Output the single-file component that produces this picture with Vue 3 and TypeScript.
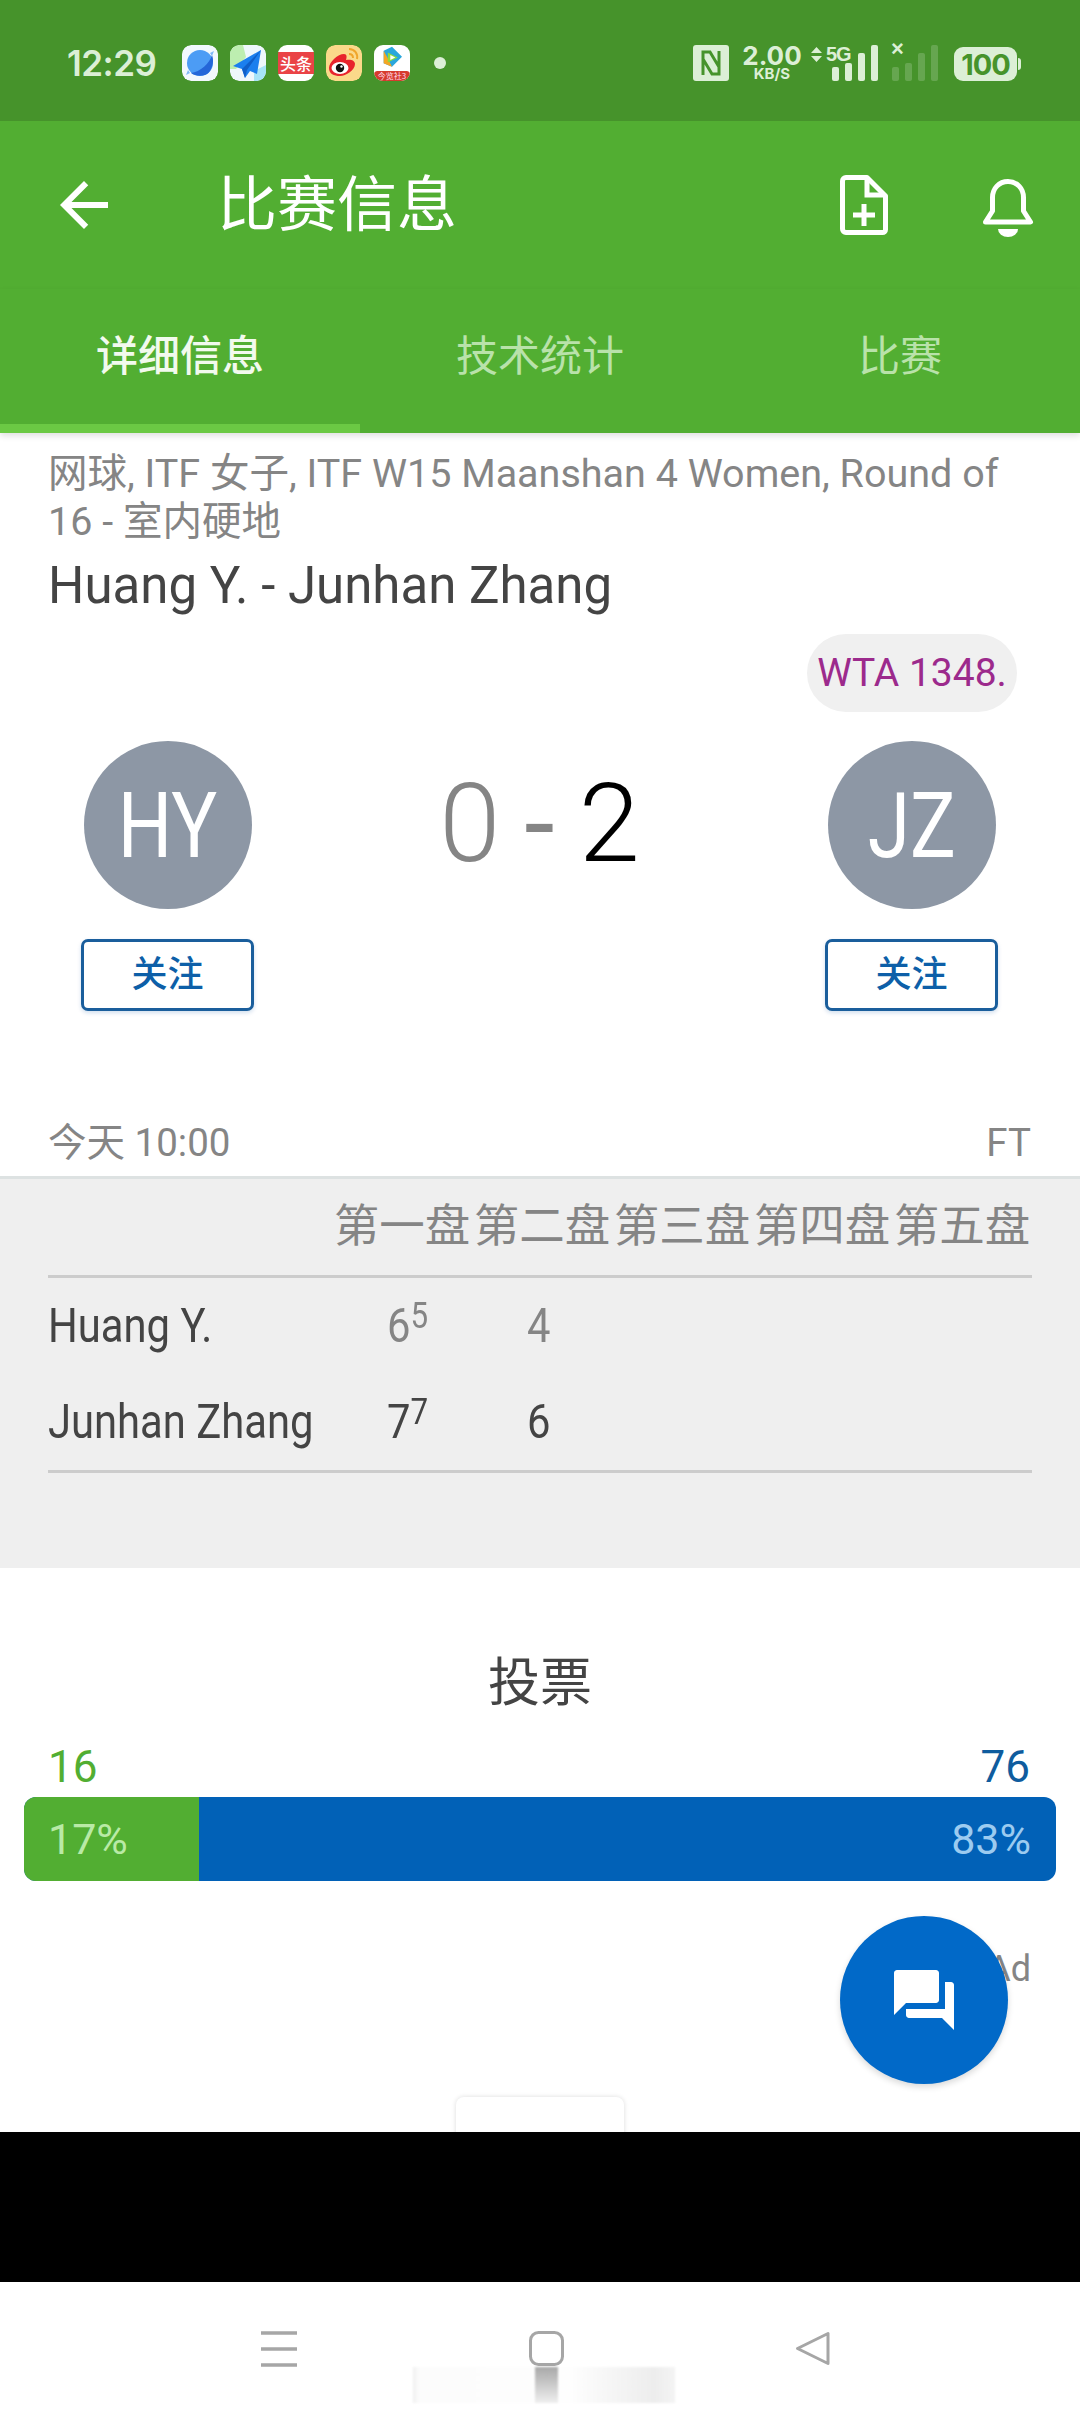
<script setup lang="ts">
const tabs = [
  { label: '详细信息', active: true },
  { label: '技术统计', active: false },
  { label: '比赛', active: false },
]
const setHeaders = ['第一盘', '第二盘', '第三盘', '第四盘', '第五盘']
const players = [
  { initials: 'HY' },
  { initials: 'JZ', rank: 'WTA 1348.' },
]
const rows = [
  { name: 'Huang Y.', sets: [{ v: '6', tie: '5', won: false }, { v: '4', won: false }] },
  { name: 'Junhan Zhang', sets: [{ v: '7', tie: '7', won: true }, { v: '6', won: true }] },
]
const signalBars = [14, 18, 28, 36]
const votes = { home: 16, away: 76, homePct: 17, awayPct: 83 }
</script>

<template>
  <div class="page">
    <div class="status">
      <span class="clock">12:29</span>
      <div class="apps">
        <svg class="app" viewBox="0 0 36 36">
          <rect width="36" height="36" rx="9" fill="#f2f8fd" />
          <circle cx="18" cy="18" r="13" fill="#4c9cf5" />
          <path d="M30 10c-2 8-12 17-21 18 5 4 15 4 19-2 3-5 4-11 2-16z" fill="#2466d8" />
          <path d="M28 8l4-2-2 5zM8 28l-4 2 2-5z" fill="#7db8f7" />
        </svg>
        <svg class="app" viewBox="0 0 36 36">
          <rect width="36" height="36" rx="9" fill="#eef7fb" />
          <path d="M0 9a9 9 0 0 1 9-9h4l3 12L6 24H0z" fill="#bdeeb0" />
          <path d="M24 36h3a9 9 0 0 0 9-9v-7l-12 6z" fill="#a6e4f7" />
          <path d="M31 5 3 21l9 3 3 9 5-7 7 3z" fill="#1b7fee" />
          <path d="M31 5 12 24l3 9 2-8z" fill="#0f5fc8" />
        </svg>
        <div class="app toutiao">
          <span>头条</span>
        </div>
        <svg class="app" viewBox="0 0 36 36">
          <rect width="36" height="36" rx="9" fill="#fbd98a" />
          <path d="M3 23c0-6 9-14 15-14 3 0 3 3 2 6 4-1 9 0 9 4 0 6-9 12-15 12S3 29 3 23z" fill="#e8232c" />
          <ellipse cx="14" cy="23" rx="8.5" ry="6" fill="#fff" />
          <circle cx="14" cy="23" r="4.2" fill="#111" />
          <circle cx="15.5" cy="21.5" r="1.2" fill="#fff" />
          <path d="M23 4c6 0 9 5 8 10M23 9c3 0 4 2 4 4" fill="none" stroke="#f0a52a" stroke-width="2" />
        </svg>
        <div class="app video">
          <svg viewBox="0 0 36 36">
            <path d="M8 7 18 2l12 12-12 12-10-4z" fill="#2aa7dc" />
            <path d="M8 7v15l10 4-6-12z" fill="#f5a623" />
            <path d="M13 9v12l12-6z" fill="#8ddb3c" />
            <path d="M16 12v6l6-3z" fill="#fff" />
          </svg>
          <span>今览社3</span>
        </div>
        <i class="dot"></i>
      </div>

      <div class="sys">
        <svg class="nfc" viewBox="0 0 36 36">
          <rect width="36" height="36" rx="3" fill="#dcefd6" />
          <path d="M10 30V7h7l9 15M26 6v23h-7l-9-15" fill="none" stroke="#46932b" stroke-width="3" />
        </svg>
        <div class="speed">
          <b>2.00</b>
          <small>KB/S</small>
        </div>
        <div class="net">
          <svg class="updown" viewBox="0 0 11 15">
            <path d="M5.5 0 11 6H0zM0 9h11l-5.5 6z" fill="#dcefd6" />
          </svg>
          <b>5G</b>
        </div>
        <div class="bars">
          <i v-for="h in signalBars" :key="h" :style="{ height: h + 'px' }"></i>
        </div>
        <div class="sim2">
          <span>×</span>
          <div class="bars faded">
            <i v-for="h in signalBars" :key="h" :style="{ height: h + 'px' }"></i>
          </div>
        </div>
        <div class="battery"><span>100</span></div>
      </div>
    </div>

    <div class="toolbar">
      <svg class="back" viewBox="0 0 24 24">
        <path d="M20 11H7.83l5.59-5.59L12 4l-8 8 8 8 1.41-1.41L7.83 13H20v-2z" fill="#fff" />
      </svg>
      <h1>比赛信息</h1>
      <svg class="file" viewBox="0 0 48 60">
        <path d="M6 2.5h21L45.5 21v33.5a3 3 0 0 1-3 3H6a3.5 3.5 0 0 1-3.5-3.5V6A3.5 3.5 0 0 1 6 2.5z" fill="none" stroke="#fff" stroke-width="5" stroke-linejoin="round" />
        <path d="M27 3v17h18M24 29v22M13 40h22" fill="none" stroke="#fff" stroke-width="5" />
      </svg>
      <svg class="bell" viewBox="0 0 52 58">
        <path d="M26 2.5c9 0 15.5 7 15.5 16V32l7 11H3.5l7-11V18.5c0-9 6.5-16 15.5-16z" fill="none" stroke="#fff" stroke-width="5" stroke-linejoin="round" />
        <path d="M16 50h20a10 8 0 0 1-20 0z" fill="#fff" />
      </svg>
    </div>

    <div class="tabs">
      <div v-for="t in tabs" :key="t.label" class="tab" :class="{ 'tab--active': t.active }">{{ t.label }}</div>
    </div>

    <main class="content">
      <div class="meta">网球, ITF 女子, ITF W15 Maanshan 4 Women, Round of 16 - 室内硬地</div>
      <div class="match">Huang Y. - Junhan Zhang</div>

      <div class="rank-row"><span class="rank">{{ players[1].rank }}</span></div>

      <div class="hero">
        <div class="player">
          <div class="avatar"><span>{{ players[0].initials }}</span></div>
          <button class="follow">关注</button>
        </div>
        <div class="score">
          <span class="lost">0</span><span class="dash">-</span><span class="won">2</span>
        </div>
        <div class="player">
          <div class="avatar"><span>{{ players[1].initials }}</span></div>
          <button class="follow">关注</button>
        </div>
      </div>

      <div class="time-row">
        <span>今天 10:00</span>
        <span>FT</span>
      </div>

      <section class="sets">
        <div class="sets-head">
          <span></span>
          <span v-for="h in setHeaders" :key="h">{{ h }}</span>
        </div>
        <div class="sets-body">
          <div v-for="r in rows" :key="r.name" class="sets-row">
            <span class="name"><em>{{ r.name }}</em></span>
            <span v-for="(s, i) in r.sets" :key="i" class="set" :class="{ 'set--won': s.won }">
              <em>{{ s.v }}<sup v-if="s.tie">{{ s.tie }}</sup></em>
            </span>
          </div>
        </div>
      </section>

      <section class="vote">
        <h2>投票</h2>
        <div class="vote-counts">
          <span class="c-home">{{ votes.home }}</span>
          <span class="c-away">{{ votes.away }}</span>
        </div>
        <div class="vote-bar">
          <div class="vote-home" :style="{ width: '175px' }">{{ votes.homePct }}%</div>
          <div class="vote-away">{{ votes.awayPct }}%</div>
        </div>
        <div class="ad">Ad</div>
        <div class="ad-card"></div>
      </section>

      <div class="fab">
        <svg viewBox="0 0 24 24">
          <path d="M21 6h-2v9H6v2c0 .55.45 1 1 1h11l4 4V7c0-.55-.45-1-1-1zm-4 6V3c0-.55-.45-1-1-1H3c-.55 0-1 .45-1 1v14l4-4h10c.55 0 1-.45 1-1z" fill="#fff" />
        </svg>
      </div>
    </main>

    <div class="blackout"></div>

    <nav class="navbar">
      <svg class="nav-menu" viewBox="0 0 36 36">
        <path d="M0 2h36M0 18h36M0 34h36" stroke="#a6a6a6" stroke-width="3.4" />
      </svg>
      <svg class="nav-home" viewBox="0 0 35 35">
        <rect x="1.5" y="1.5" width="32" height="32" rx="8" fill="none" stroke="#a6a6a6" stroke-width="3" />
      </svg>
      <svg class="nav-back" viewBox="0 0 35 35">
        <path d="M33 2.5v30L2.5 17.5z" fill="none" stroke="#a6a6a6" stroke-width="3" stroke-linejoin="round" />
      </svg>
      <div class="streak"><i></i></div>
    </nav>
  </div>
</template>

<style scoped>
.page {
  position: relative;
  display: flex;
  flex-direction: column;
  width: 1080px;
  height: 2414px;
  overflow: hidden;
  background: #fff;
  font-family: Roboto, "Noto Sans CJK SC", sans-serif;
}

.status {
  display: flex;
  align-items: center;
  height: 121px;
  padding: 5px 63px 0 67px;
  box-sizing: border-box;
  background: #46932b;
  color: #dcefd6;
  flex: none;
}
.clock {
  width: 115px;
  font: 600 35px Inter, Roboto, sans-serif;
  letter-spacing: -0.5px;
}
.apps {
  display: flex;
  align-items: center;
  gap: 12px;
}
.app {
  display: block;
  width: 36px;
  height: 36px;
  flex: none;
  border-radius: 9px;
  overflow: hidden;
}
.toutiao {
  display: flex;
  align-items: center;
  justify-content: center;
  background: linear-gradient(#fff 0 7px, #ea4346 7px 29px, #fff 29px);
  color: #fff;
  font: 500 16px "Noto Sans CJK SC", sans-serif;
  white-space: nowrap;
}
.video {
  position: relative;
  background: #fff;
}
.video svg {
  display: block;
  width: 30px;
  height: 30px;
  margin: 0 auto;
}
.video span {
  position: absolute;
  left: 0;
  right: 0;
  bottom: 0;
  height: 10px;
  background: #d63b2e;
  border-radius: 5px 5px 9px 9px;
  color: #fde;
  font: 8px/10px "Noto Sans CJK SC", sans-serif;
  text-align: center;
  white-space: nowrap;
}
.dot {
  width: 12px;
  height: 12px;
  margin-left: 12px;
  border-radius: 50%;
  background: #dcefd6;
}
.sys {
  display: flex;
  align-items: flex-end;
  height: 36px;
  margin-left: auto;
}
.nfc {
  width: 36px;
  height: 36px;
  flex: none;
}
.speed {
  display: flex;
  flex-direction: column;
  align-items: center;
  width: 58px;
  margin-left: 14px;
  font-family: Inter, Roboto, sans-serif;
}
.speed b {
  font-size: 26px;
  line-height: 22px;
  font-weight: 700;
}
.speed small {
  font-size: 15px;
  line-height: 14px;
  font-weight: 700;
}
.net {
  display: flex;
  align-items: flex-start;
  align-self: flex-start;
  gap: 4px;
  width: 37px;
  margin-left: 10px;
  margin-right: -16px;
  font: 700 20px/18px "Liberation Sans", sans-serif;
}
.updown {
  width: 11px;
  height: 15px;
  margin-top: 2px;
  flex: none;
}
.net b {
  letter-spacing: -1px;
  white-space: nowrap;
}
.bars {
  display: flex;
  align-items: flex-end;
  gap: 6px;
}
.bars i {
  width: 7px;
  border-radius: 2px;
  background: #dcefd6;
}
.sim2 {
  position: relative;
  margin-left: 14px;
}
.sim2 span {
  position: absolute;
  left: -1px;
  top: -8px;
  font: 700 22px/24px "Liberation Sans", sans-serif;
}
.bars.faded i {
  opacity: 0.22;
}
.battery {
  position: relative;
  display: flex;
  align-items: center;
  justify-content: center;
  width: 63px;
  height: 34px;
  margin-left: 16px;
  border-radius: 9px;
  background: #dcefd6;
  color: #46932b;
  font: 700 29px Inter, Roboto, sans-serif;
  letter-spacing: -1px;
}
.battery::after {
  content: "";
  position: absolute;
  right: -4px;
  top: 11px;
  width: 3px;
  height: 12px;
  border-radius: 0 3px 3px 0;
  background: #dcefd6;
}

.toolbar {
  display: flex;
  align-items: center;
  height: 168px;
  padding: 0 46px 0 48px;
  box-sizing: border-box;
  background: #52ae32;
  flex: none;
}
.back {
  width: 72px;
  height: 72px;
  flex: none;
}
.toolbar h1 {
  margin: 2px 0 0 97px;
  font-size: 60px;
  font-weight: 400;
  line-height: 70px;
  color: #fff;
}
.file {
  width: 48px;
  height: 60px;
  margin-left: auto;
  flex: none;
}
.bell {
  width: 52px;
  height: 58px;
  margin-top: 6px;
  margin-left: 94px;
  flex: none;
}

.tabs {
  position: relative;
  z-index: 1;
  display: flex;
  height: 144px;
  background: #52ae32;
  box-shadow: 0 3px 6px rgba(0, 0, 0, 0.12);
  flex: none;
}
.tab {
  display: flex;
  justify-content: center;
  box-sizing: border-box;
  width: 360px;
  padding-top: 40px;
  color: #b9e2aa;
  font-size: 42px;
  line-height: 56px;
  font-weight: 400;
}
.tab--active {
  color: #f2faee;
  font-weight: 500;
  border-bottom: 9px solid #6bc944;
}

.content {
  position: relative;
  height: 1699px;
  overflow: hidden;
  flex: none;
}
.meta {
  padding: 17px 50px 0 48px;
  color: #858585;
  font-size: 39.5px;
  line-height: 48px;
}
.match {
  margin-top: 10px;
  padding-left: 48px;
  color: #444;
  font-size: 51px;
  line-height: 60px;
}
.rank-row {
  display: flex;
  justify-content: flex-end;
  margin-top: 18px;
  padding-right: 63px;
}
.rank {
  box-sizing: border-box;
  width: 210px;
  height: 78px;
  border-radius: 39px;
  background: #f0f0f0;
  color: #9c2a8c;
  font-size: 39px;
  line-height: 78px;
  text-align: center;
  white-space: nowrap;
}
.hero {
  display: flex;
  justify-content: space-between;
  margin-top: 29px;
  padding: 0 82px 0 81px;
}
.player {
  display: flex;
  flex-direction: column;
  align-items: center;
  width: 173px;
}
.avatar {
  display: flex;
  align-items: center;
  justify-content: center;
  width: 168px;
  height: 168px;
  padding-top: 3px;
  box-sizing: border-box;
  border-radius: 50%;
  background: #8d97a5;
  color: #fff;
  font-size: 90px;
}
.avatar span {
  transform: scaleX(0.85);
}
.follow {
  box-sizing: border-box;
  width: 173px;
  height: 72px;
  margin-top: 30px;
  padding: 0 0 8px;
  border: 3px solid #1a5e9c;
  border-radius: 7px;
  background: #fff;
  box-shadow: 0 2px 4px rgba(0, 80, 160, 0.18);
  color: #0d5fa8;
  font: 500 36px "Noto Sans CJK SC", sans-serif;
}
.score {
  display: flex;
  align-items: center;
  justify-content: center;
  gap: 24px;
  height: 166px;
  padding-top: 0;
  font-size: 110px;
  font-weight: 300;
  line-height: 166px;
}
.lost {
  color: #858585;
}
.won {
  color: #000;
}
.dash {
  color: #858585;
  font-weight: 400;
}
.time-row {
  display: flex;
  justify-content: space-between;
  margin-top: 101px;
  padding: 0 49px 0 48px;
  height: 64px;
  color: #858585;
  font-size: 38.5px;
  line-height: 62px;
}

.sets {
  box-sizing: border-box;
  height: 392px;
  padding: 0 48px;
  background: #efefef;
  border-top: 3px solid #dde2e2;
}
.sets-head {
  display: grid;
  grid-template-columns: minmax(0, 1fr) repeat(5, 140px);
  align-items: center;
  height: 96px;
  border-bottom: 3px solid #cccccc;
  color: #858585;
  font-size: 45.5px;
  line-height: 90px;
  text-align: center;
  white-space: nowrap;
}
.sets-body {
  height: 192px;
  border-bottom: 3px solid #cccccc;
}
.sets-row {
  display: grid;
  grid-template-columns: minmax(0, 1fr) repeat(5, 140px);
  height: 96px;
  align-items: center;
  font-size: 48px;
  line-height: 96px;
  white-space: nowrap;
}
.name {
  color: #444;
}
.name em,
.set em {
  display: inline-block;
  font-style: normal;
  transform: scaleX(0.87);
  transform-origin: left center;
}
.set {
  padding-left: 55px;
  color: #858585;
}
.set--won {
  color: #444;
}
.set sup {
  font-size: 36px;
  line-height: 0;
  vertical-align: 14px;
}

.vote {
  position: relative;
  height: 564px;
}
.vote h2 {
  margin: 0;
  padding-top: 80px;
  color: #444;
  font-size: 52px;
  font-weight: 400;
  line-height: 72px;
  text-align: center;
}
.vote-counts {
  display: flex;
  justify-content: space-between;
  margin-top: 15px;
  padding: 0 50px 0 48px;
  font-size: 44px;
  line-height: 64px;
}
.c-home {
  color: #52ae32;
}
.c-away {
  color: #0f5c9e;
}
.vote-bar {
  display: flex;
  height: 84px;
  margin: -2px 24px 0;
  border-radius: 12px;
  overflow: hidden;
  background: #0161b7;
  font-size: 43px;
  line-height: 84px;
}
.vote-home {
  box-sizing: border-box;
  padding-left: 24px;
  background: #52ae32;
  color: #b9eaa6;
}
.vote-away {
  flex: 1;
  padding-right: 25px;
  color: #9ccbf0;
  text-align: right;
}
.ad {
  margin-top: 66px;
  padding-right: 49px;
  color: #858585;
  font-size: 36px;
  line-height: 44px;
  text-align: right;
}
.ad-card {
  width: 168px;
  height: 60px;
  margin: 106px auto 0;
  border-radius: 8px;
  background: #fff;
  box-shadow: 0 0 5px rgba(0, 0, 0, 0.14);
}
.fab {
  position: absolute;
  left: 840px;
  top: 1483px;
  display: flex;
  align-items: center;
  justify-content: center;
  width: 168px;
  height: 168px;
  border-radius: 50%;
  background: #0169c8;
  box-shadow: 0 3px 6px rgba(0, 0, 0, 0.15);
}
.fab svg {
  width: 72px;
  height: 72px;
}

.blackout {
  position: relative;
  z-index: 1;
  height: 150px;
  background: #000;
  flex: none;
}
.navbar {
  position: relative;
  display: flex;
  flex: 1;
  align-items: flex-start;
  padding: 49px 0 0 261px;
  background: #fff;
}
.nav-menu {
  width: 36px;
  height: 36px;
}
.nav-home {
  width: 35px;
  height: 35px;
  margin-left: 232px;
}
.nav-back {
  width: 35px;
  height: 35px;
  margin-left: 231px;
}
.streak {
  position: absolute;
  left: 413px;
  top: 85px;
  width: 262px;
  height: 36px;
  background: linear-gradient(90deg, #f0f0f0 0, #fcfcfc 6px, #fefefe 60%, #ededed 92%, #f4f4f4 100%);
  filter: blur(1px);
}
.streak i {
  position: absolute;
  left: 122px;
  top: 0;
  width: 23px;
  height: 36px;
  background: linear-gradient(#a8a8a8, #efefef);
}
</style>
